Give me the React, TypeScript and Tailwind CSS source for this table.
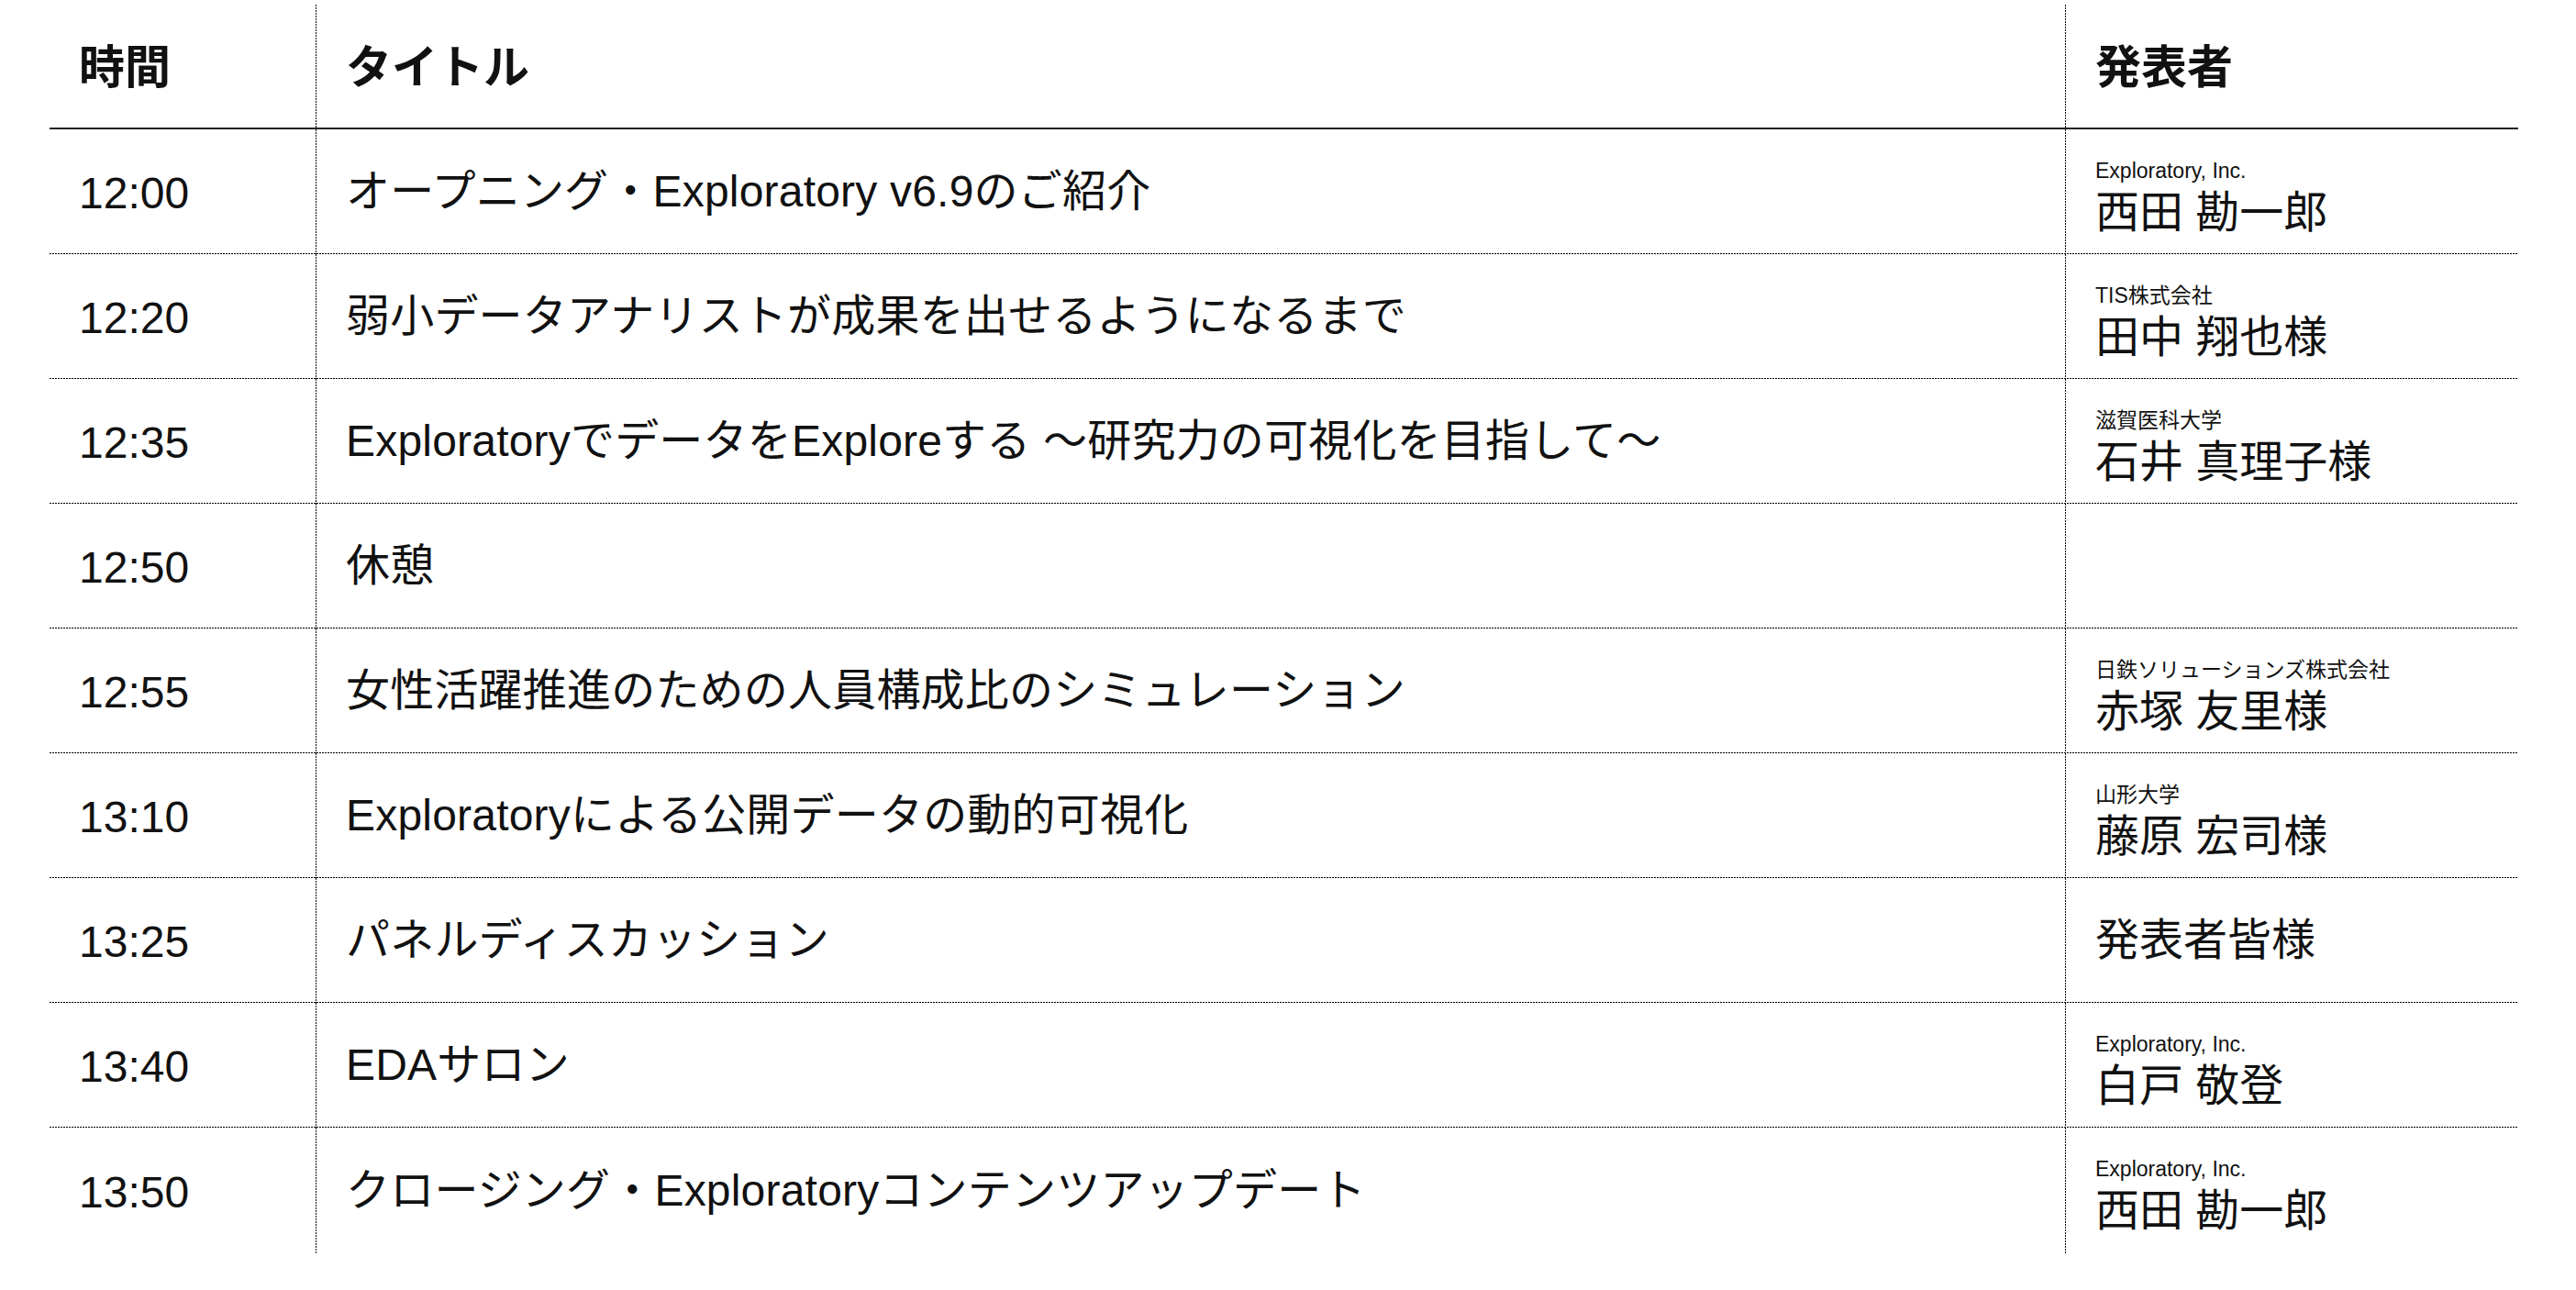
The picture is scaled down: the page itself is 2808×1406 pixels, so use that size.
interface Session {
  time: string
  title: string
  org?: string
  name?: string
}

const SESSIONS: Session[] = [
  { time: '12:00', title: 'オープニング・Exploratory v6.9のご紹介', org: 'Exploratory, Inc.', name: '西田 勘一郎' },
  { time: '12:20', title: '弱小データアナリストが成果を出せるようになるまで', org: 'TIS株式会社', name: '田中 翔也様' },
  { time: '12:35', title: 'ExploratoryでデータをExploreする 〜研究力の可視化を目指して〜', org: '滋賀医科大学', name: '石井 真理子様' },
  { time: '12:50', title: '休憩' },
  { time: '12:55', title: '女性活躍推進のための人員構成比のシミュレーション', org: '日鉄ソリューションズ株式会社', name: '赤塚 友里様' },
  { time: '13:10', title: 'Exploratoryによる公開データの動的可視化', org: '山形大学', name: '藤原 宏司様' },
  { time: '13:25', title: 'パネルディスカッション', name: '発表者皆様' },
  { time: '13:40', title: 'EDAサロン', org: 'Exploratory, Inc.', name: '白戸 敬登' },
  { time: '13:50', title: 'クロージング・Exploratoryコンテンツアップデート', org: 'Exploratory, Inc.', name: '西田 勘一郎' },
]

const FONT = "font-['Liberation_Sans','Noto_Sans_CJK_JP',sans-serif]"

// dotted rules: 2px dot, 1px gap
const ROW_RULE =
  'bg-[repeating-linear-gradient(to_right,#000_0px,#000_2px,transparent_2px,transparent_3px)] bg-[length:100%_1px] bg-bottom bg-no-repeat'
const COL_RULE =
  'bg-[repeating-linear-gradient(to_bottom,#000_0px,#000_2px,transparent_2px,transparent_3px)] bg-[length:1px_100%] bg-left bg-no-repeat pl-[33px]'

export default function App() {
  return (
    <div className={`min-h-screen bg-white text-[#111] ${FONT}`}>
      <div className="ml-[54px] w-[2691px] pt-[5px]">
        {/* header */}
        <div className="grid grid-cols-[290px_1907px_494px] h-[136px] border-b-2 border-[#222]">
          <div className="flex items-center px-8 pt-1 text-[50px] font-bold leading-none">時間</div>
          <div className={`flex items-center pr-8 pt-1 text-[50px] font-bold leading-none ${COL_RULE}`}>タイトル</div>
          <div className={`flex items-center pr-8 pt-1 text-[50px] font-bold leading-none ${COL_RULE}`}>発表者</div>
        </div>

        {SESSIONS.map((s, i) => (
          <div
            key={i}
            className={
              i === SESSIONS.length - 1
                ? 'grid grid-cols-[290px_1907px_494px] h-[137px]'
                : `grid grid-cols-[290px_1907px_494px] h-[136px] ${ROW_RULE}`
            }
          >
            <div className="flex items-center px-8 pt-1 text-[48px] leading-[48px]">{s.time}</div>
            <div className={`flex items-center pr-8 text-[48px] leading-[48px] whitespace-nowrap tracking-[0.2px] ${COL_RULE}`}>
              {s.title}
            </div>
            {s.org ? (
              <div className={`flex flex-col pr-8 pt-[33px] whitespace-nowrap ${COL_RULE}`}>
                <div className="text-[23px] leading-[24px]">{s.org}</div>
                <div className="mt-[10px] text-[48px] leading-[48px]">{s.name}</div>
              </div>
            ) : (
              <div className={`flex items-center pr-8 text-[48px] leading-[48px] whitespace-nowrap ${COL_RULE}`}>
                {s.name}
              </div>
            )}
          </div>
        ))}
      </div>
    </div>
  )
}
